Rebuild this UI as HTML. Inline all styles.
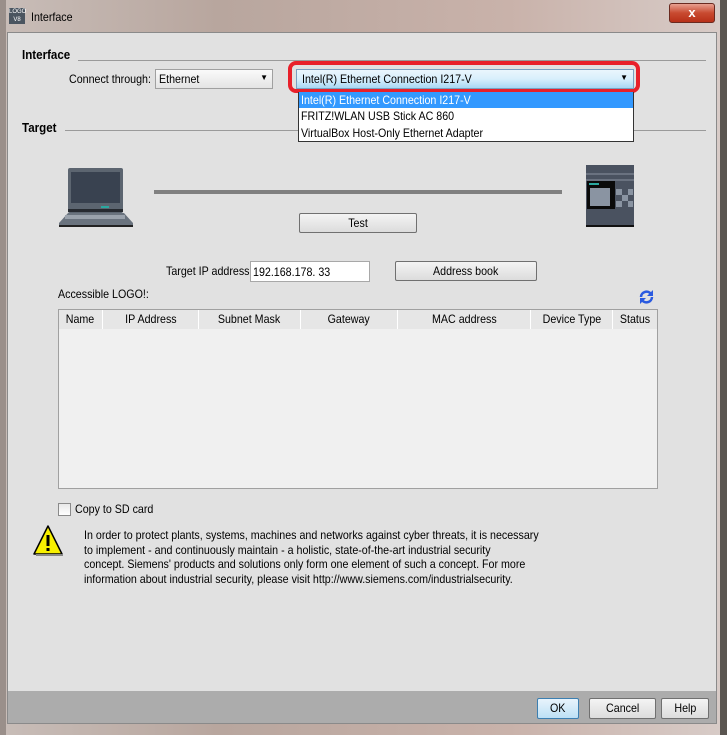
<!DOCTYPE html>
<html><head><meta charset="utf-8"><style>
*{box-sizing:border-box;margin:0;padding:0}
body{width:727px;height:735px;overflow:hidden;background:#6f6a66;font-family:"Liberation Sans",sans-serif;font-size:12px;color:#000;position:relative}
.a{position:absolute;white-space:nowrap}
.n{display:inline-block;transform:scaleX(.89);transform-origin:0 0;white-space:nowrap}
.c{display:inline-block;transform:scaleX(.89);transform-origin:50% 0;white-space:nowrap}
.btn{position:absolute;border:1px solid #707070;border-radius:2px;background:linear-gradient(#f4f4f4,#dcdcdc);text-align:center;font-size:12px}
.hdr{position:absolute;top:0;height:19px;line-height:19px;text-align:center;border-right:1px solid #fff;font-size:12px}
</style></head><body>
<div class="a" style="left:0;top:0;width:727px;height:735px;background:linear-gradient(90deg,#c8bdb8,#b8a69e 30%,#c9b2aa 70%,#d8ccc8)"></div>
<div class="a" style="left:0;top:0;width:6px;height:735px;background:#9a8f8a"></div>
<div class="a" style="left:720px;top:0;width:7px;height:735px;background:#5a5550"></div>
<div class="a" style="left:9px;top:8px;width:16px;height:16px;background:#4a5560;color:#fff;font-size:6px;line-height:8px;text-align:center">LOGO<br>V8</div>
<div class="a" style="left:31px;top:10px"><span class="n">Interface</span></div>
<div class="a" style="left:669px;top:3px;width:46px;height:20px;border:1px solid #6a2a20;border-radius:3px;background:linear-gradient(#e8a090,#c84a30 50%,#b83018);color:#fff;font-weight:bold;text-align:center;line-height:18px;font-size:13px">x</div>
<div class="a" style="left:7px;top:32px;width:710px;height:692px;background:#e1e1e1;border:1px solid #8a8a8a"></div>
<div class="a" style="left:8px;top:691px;width:708px;height:32px;background:#acacac"></div>

<div class="a" style="left:22px;top:47px;font-weight:bold;font-size:13px"><span class="n">Interface</span></div>
<div class="a" style="left:78px;top:60px;width:628px;height:1px;background:#9a9a9a"></div>
<div class="a" style="left:69px;top:72px"><span class="n">Connect through:</span></div>
<div class="a" style="left:155px;top:69px;width:118px;height:20px;border:1px solid #a0a0a0;background:linear-gradient(#fafafa,#e4e4e4);padding:2px 3px"><span class="n">Ethernet</span><span class="a" style="right:4px;top:3px;font-size:8px">▼</span></div>

<div class="a" style="left:288px;top:61px;width:352px;height:32px;border:4px solid #e8202a;border-radius:8px"></div>
<div class="a" style="left:296px;top:69px;width:338px;height:20px;border:1px solid #7aa0c0;background:linear-gradient(#eaf6fd,#d8effc 50%,#a8d8f4);padding:2px 5px"><span class="n">Intel(R) Ethernet Connection I217-V</span><span class="a" style="right:5px;top:3px;font-size:8px">▼</span></div>
<div class="a" style="left:298px;top:92px;width:336px;height:50px;border:1px solid #333;background:#fff"></div>
<div class="a" style="left:299px;top:92px;width:334px;height:16px;background:#3399ff;color:#fff;padding:0 2px;line-height:16px"><span class="n">Intel(R) Ethernet Connection I217-V</span></div>
<div class="a" style="left:301px;top:109px"><span class="n">FRITZ!WLAN USB Stick AC 860</span></div>
<div class="a" style="left:301px;top:126px"><span class="n">VirtualBox Host-Only Ethernet Adapter</span></div>

<div class="a" style="left:22px;top:120px;font-weight:bold;font-size:13px"><span class="n">Target</span></div>
<div class="a" style="left:65px;top:130px;width:233px;height:1px;background:#9a9a9a"></div>
<div class="a" style="left:634px;top:130px;width:72px;height:1px;background:#9a9a9a"></div>

<svg class="a" style="left:57px;top:165px" width="78" height="62" viewBox="0 0 78 62">
<rect x="11" y="3" width="55" height="45" fill="#5c6570" rx="2"/>
<rect x="14" y="7" width="49" height="36" fill="#394250"/>
<rect x="12" y="38" width="54" height="8" fill="#5c6570"/>
<rect x="11" y="44" width="55" height="3" fill="#262a30"/>
<rect x="44" y="41" width="8" height="2" fill="#2aa8a0"/>
<path d="M11 48 L2 58 L2 61 L76 61 L76 58 L67 48 Z" fill="#6a737e"/>
<rect x="8" y="50" width="60" height="4" fill="#9aa2ac"/>
<rect x="2" y="60" width="74" height="2" fill="#222"/>
</svg>
<div class="a" style="left:154px;top:190px;width:408px;height:4px;background:#808080"></div>
<svg class="a" style="left:586px;top:165px" width="48" height="62" viewBox="0 0 48 62">
<rect width="48" height="62" fill="#4a5260"/>
<rect y="8" width="48" height="2" fill="#6a7280"/>
<rect y="14" width="48" height="2" fill="#6a7280"/>
<rect x="1" y="16" width="28" height="28" fill="#0a0a0a"/>
<rect x="3" y="18" width="10" height="2" fill="#2aa8a0"/>
<rect x="4" y="23" width="20" height="18" fill="#8a94a2"/>
<rect x="30" y="24" width="6" height="6" fill="#8a94a2"/><rect x="36" y="30" width="6" height="6" fill="#8a94a2"/><rect x="30" y="36" width="6" height="6" fill="#8a94a2"/><rect x="42" y="36" width="5" height="6" fill="#8a94a2"/><rect x="42" y="24" width="5" height="6" fill="#8a94a2"/>
<rect y="60" width="48" height="2" fill="#111"/>
</svg>
<div class="btn" style="left:299px;top:213px;width:118px;height:20px;line-height:18px"><span class="c">Test</span></div>

<div class="a" style="left:166px;top:264px"><span class="n">Target IP address:</span></div>
<div class="a" style="left:250px;top:261px;width:120px;height:21px;border:1px solid #a8a8a8;background:#fff;padding:3px 2px"><span class="n">192.168.178. 33</span></div>
<div class="btn" style="left:395px;top:261px;width:142px;height:20px;line-height:18px"><span class="c">Address book</span></div>

<div class="a" style="left:58px;top:287px"><span class="n">Accessible LOGO!:</span></div>
<svg class="a" style="left:638px;top:289px" width="17" height="16" viewBox="0 0 17 16"><path d="M3 8 A5.5 5.5 0 0 1 13 5" stroke="#2a5ae0" stroke-width="2.5" fill="none"/><path d="M15 1 L15 7 L9 7 Z" fill="#2a5ae0"/><path d="M14 8 A5.5 5.5 0 0 1 4 11" stroke="#2a5ae0" stroke-width="2.5" fill="none"/><path d="M2 15 L2 9 L8 9 Z" fill="#2a5ae0"/></svg>

<div class="a" style="left:58px;top:309px;width:600px;height:180px;border:1px solid #a0a0a0;background:#f0f0f0">
<div class="a" style="left:0;top:0;width:598px;height:19px;background:#e6e6e6"></div>
<div class="hdr" style="left:0;width:44px"><span class="c">Name</span></div>
<div class="hdr" style="left:44px;width:96px"><span class="c">IP Address</span></div>
<div class="hdr" style="left:140px;width:102px"><span class="c">Subnet Mask</span></div>
<div class="hdr" style="left:242px;width:97px"><span class="c">Gateway</span></div>
<div class="hdr" style="left:339px;width:133px"><span class="c">MAC address</span></div>
<div class="hdr" style="left:472px;width:82px"><span class="c">Device Type</span></div>
<div class="hdr" style="left:554px;width:44px;border:none"><span class="c">Status</span></div>
</div>

<div class="a" style="left:58px;top:503px;width:13px;height:13px;border:1px solid #8a8a8a;background:linear-gradient(#e8e8e8,#fff)"></div>
<div class="a" style="left:75px;top:502px"><span class="n">Copy to SD card</span></div>

<svg class="a" style="left:32px;top:524px" width="32" height="34" viewBox="0 0 32 34"><path d="M16 2 L30 30 L2 30 Z" fill="#f8f000" stroke="#000" stroke-width="1.5" stroke-linejoin="round"/><path d="M31 31 L4 31" stroke="#888" stroke-width="2"/><rect x="14.5" y="11" width="3" height="11" fill="#000"/><rect x="14.5" y="24" width="3" height="3" fill="#000"/></svg>
<div class="a" style="left:84px;top:528px;line-height:14.7px"><span class="n">In order to protect plants, systems, machines and networks against cyber threats, it is necessary<br>to implement - and continuously maintain - a holistic, state-of-the-art industrial security<br>concept. Siemens' products and solutions only form one element of such a concept. For more<br>information about industrial security, please visit http://www.siemens.com/industrialsecurity.</span></div>

<div class="btn" style="left:537px;top:698px;width:42px;height:21px;line-height:19px;border-color:#3c7fb1;background:linear-gradient(#e8f4fc,#bde0f5)"><span class="c">OK</span></div>
<div class="btn" style="left:589px;top:698px;width:67px;height:21px;line-height:19px"><span class="c">Cancel</span></div>
<div class="btn" style="left:661px;top:698px;width:48px;height:21px;line-height:19px"><span class="c">Help</span></div>
</body></html>
